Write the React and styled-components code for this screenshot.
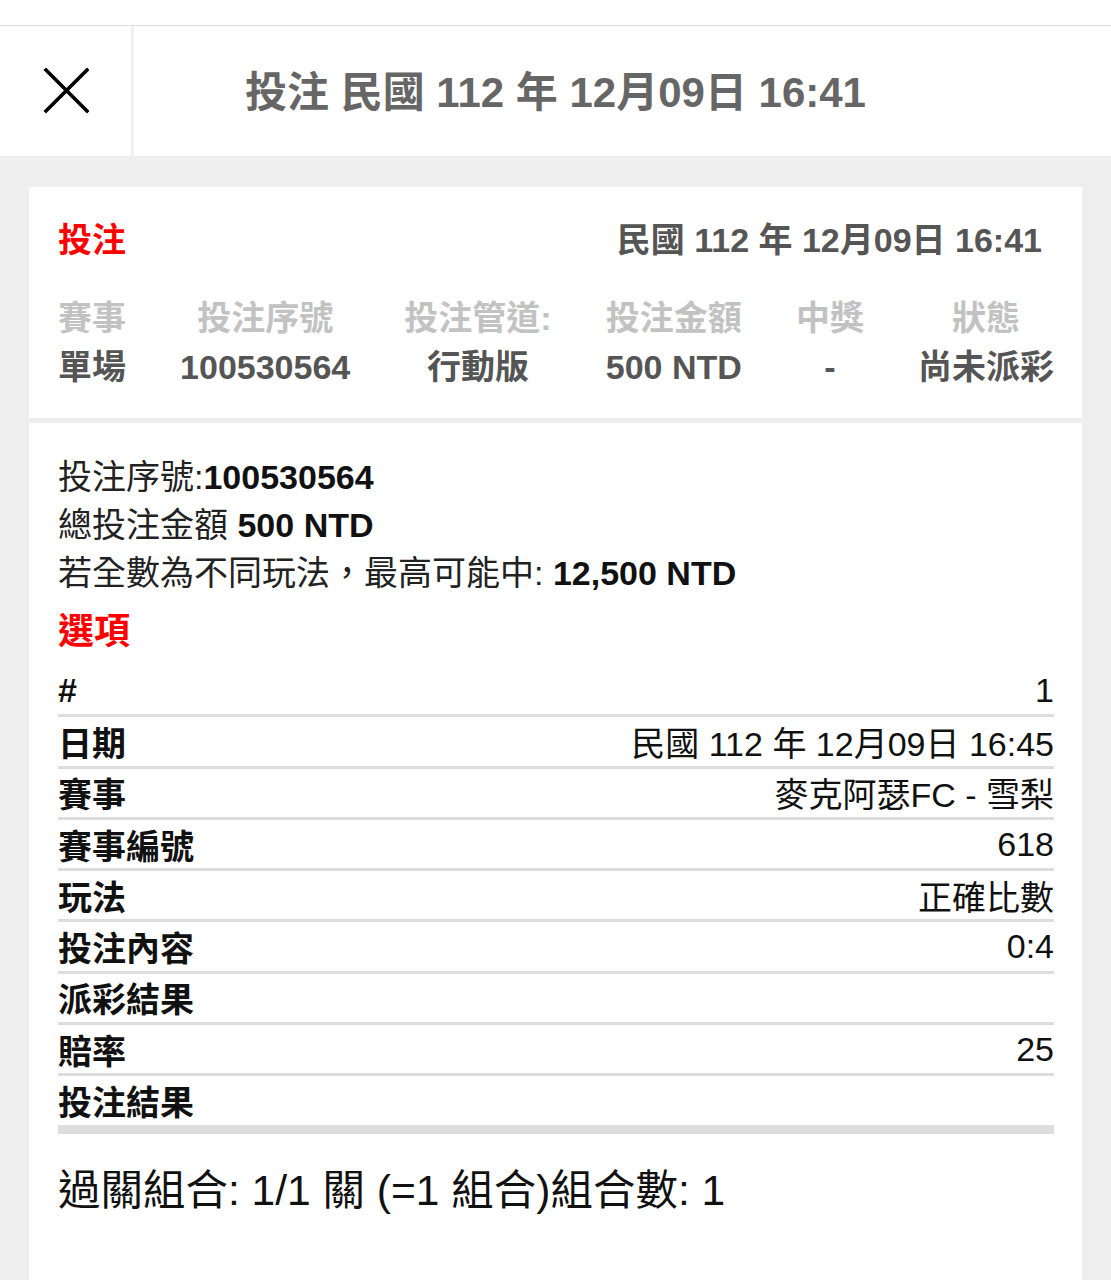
import styled, { createGlobalStyle } from 'styled-components';

const GlobalStyle = createGlobalStyle`
    html, body {
        margin: 0;
        padding: 0;
        background: #eeeeee;
    }
    body {
        font-family: "Liberation Sans", "Noto Sans CJK TC", sans-serif;
        color: #111;
    }
`

const summary = [
    { label: '賽事', value: '單場' },
    { label: '投注序號', value: '100530564' },
    { label: '投注管道:', value: '行動版' },
    { label: '投注金額', value: '500 NTD' },
    { label: '中獎', value: '-' },
    { label: '狀態', value: '尚未派彩' },
];

const rows = [
    { label: '#', value: '1' },
    { label: '日期', value: '民國 112 年 12月09日 16:45' },
    { label: '賽事', value: '麥克阿瑟FC - 雪梨' },
    { label: '賽事編號', value: '618' },
    { label: '玩法', value: '正確比數' },
    { label: '投注內容', value: '0:4' },
    { label: '派彩結果', value: '' },
    { label: '賠率', value: '25' },
    { label: '投注結果', value: '' },
];

const CloseIcon = () => (
    <svg width="46" height="46" viewBox="0 0 46 46" fill="none">
        <path d="M3 2 L44 43 M44 2 L3 43" stroke="#000" strokeWidth="3.6" strokeLinecap="square" />
    </svg>
)

const App = () => {
    return (
        <Page>
            <GlobalStyle />
            <TopStrip />
            <Header>
                <CloseButton><CloseIcon /></CloseButton>
                <HeaderTitle>投注 民國 112 年 12月09日 16:41</HeaderTitle>
            </Header>
            <Body>
                <Card>
                    <CardHead>
                        <RedTitle>投注</RedTitle>
                        <HeadDate>民國 112 年 12月09日 16:41</HeadDate>
                    </CardHead>
                    <Summary>
                        {summary.map((item) => (
                            <SummaryCol key={item.label}>
                                <SummaryLabel>{item.label}</SummaryLabel>
                                <SummaryValue>{item.value}</SummaryValue>
                            </SummaryCol>
                        ))}
                    </Summary>
                </Card>
                <DetailCard>
                    <InfoLine>投注序號:<b>100530564</b></InfoLine>
                    <InfoLine>總投注金額 <b>500 NTD</b></InfoLine>
                    <InfoLine>若全數為不同玩法，最高可能中: <b>12,500 NTD</b></InfoLine>
                    <SectionTitle>選項</SectionTitle>
                    <Table>
                        {rows.map((row, i) => (
                            <Row key={row.label} last={i === rows.length - 1}>
                                <RowLabel>{row.label}</RowLabel>
                                <RowValue>{row.value}</RowValue>
                            </Row>
                        ))}
                    </Table>
                    <Combo>過關組合: 1/1 關 (=1 組合)組合數: 1</Combo>
                </DetailCard>
            </Body>
        </Page>
    )
}

export default App;

const Page = styled.div`
    min-height: 1280px;
    background: #eeeeee;
`

const TopStrip = styled.div`
    height: 25px;
    background: #fff;
    border-bottom: 1px solid #dddddd;
`

const Header = styled.div`
    display: flex;
    height: 130px;
    background: #fff;
`

const CloseButton = styled.div`
    width: 131px;
    flex-shrink: 0;
    display: flex;
    justify-content: center;
    align-items: center;
    border-right: 3px solid #f0f0f0;
`

const HeaderTitle = styled.div`
    flex: 1;
    display: flex;
    justify-content: center;
    align-items: center;
    padding-right: 134px;
    padding-bottom: 6px;
    font-size: 42px;
    font-weight: bold;
    color: #666;
    white-space: nowrap;
`

const Body = styled.div`
    padding: 31px 29px 0;
    display: flex;
    flex-direction: column;
    gap: 5px;
`

const Card = styled.div`
    background: #fff;
    padding: 29px 28px 27px 29px;
`

const CardHead = styled.div`
    display: flex;
    justify-content: space-between;
    align-items: center;
    height: 48px;
    padding-right: 12px;
`

const RedTitle = styled.div`
    font-size: 34px;
    font-weight: bold;
    color: #ff0000;
    line-height: 48px;
`

const HeadDate = styled.div`
    font-size: 34px;
    font-weight: bold;
    color: #555;
    line-height: 48px;
`

const Summary = styled.div`
    display: flex;
    justify-content: space-between;
    margin-top: 30px;
`

const SummaryCol = styled.div`
    display: flex;
    flex-direction: column;
    align-items: center;
    text-align: center;
    white-space: nowrap;
`

const SummaryLabel = styled.div`
    font-size: 34px;
    font-weight: bold;
    color: #c2c2c2;
    line-height: 48px;
`

const SummaryValue = styled.div`
    font-size: 34px;
    font-weight: bold;
    color: #555;
    line-height: 48px;
    margin-top: 1px;
`

const DetailCard = styled.div`
    background: #fff;
    padding: 30px 28px 80px 29px;
    min-height: 800px;
`

const InfoLine = styled.div`
    font-size: 34px;
    line-height: 48px;
    color: #222;

    b {
        color: #111;
    }
`

const SectionTitle = styled.div`
    font-size: 36px;
    font-weight: bold;
    color: #ff0000;
    line-height: 48px;
    margin-top: 11px;
`

const Table = styled.div`
    margin-top: 10px;
`

const Row = styled.div`
    display: flex;
    justify-content: space-between;
    align-items: center;
    height: 48.3px;
    border-bottom: ${(p) => (p.last ? '9px' : '3px')} solid #dddddd;
    font-size: 34px;
`

const RowLabel = styled.div`
    font-weight: bold;
    color: #111;
`

const RowValue = styled.div`
    color: #111;
`

const Combo = styled.div`
    margin-top: 27px;
    font-size: 42.5px;
    line-height: 60px;
    color: #111;
`
